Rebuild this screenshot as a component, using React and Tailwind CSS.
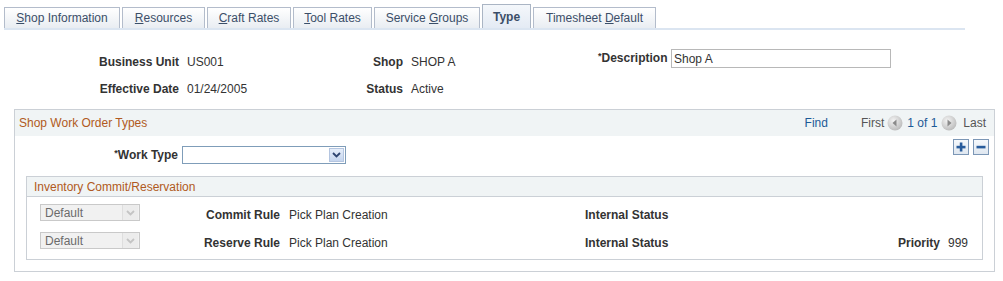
import React from "react";

const tabs = [
  { pre: "", u: "S", post: "hop Information", w: 116 },
  { pre: "", u: "R", post: "esources", w: 83 },
  { pre: "", u: "C", post: "raft Rates", w: 84 },
  { pre: "", u: "T", post: "ool Rates", w: 79 },
  { pre: "Service ", u: "G", post: "roups", w: 106 },
  { pre: "Type", u: "", post: "", w: 49, active: true },
  { pre: "Timesheet ", u: "D", post: "efault", w: 123 },
];

function Tab({ t }) {
  if (t.active) {
    return (
      <div
        style={{ width: t.w }}
        className="h-[24px] mr-[2px] border border-b-0 border-[#aab5c4] bg-gradient-to-b from-[#f4f7fb] to-[#e4ebf4] flex items-center justify-center font-bold text-[#3b4e68]"
      >
        {t.pre}
      </div>
    );
  }
  return (
    <div
      style={{ width: t.w }}
      className="h-[21px] mr-[2px] border border-b-0 border-[#b3bccb] bg-gradient-to-b from-[#ffffff] to-[#e9edf2] flex items-center justify-center text-[#3b4e68]"
    >
      <span>
        {t.pre}
        <span className="underline">{t.u}</span>
        {t.post}
      </span>
    </div>
  );
}

function RoundArrow({ dir }) {
  return (
    <svg width="16" height="16" viewBox="0 0 16 16" className="inline-block">
      <defs>
        <radialGradient id={"g" + dir} cx="40%" cy="35%" r="70%">
          <stop offset="0%" stopColor="#f4f4f4" />
          <stop offset="100%" stopColor="#b9b9b9" />
        </radialGradient>
      </defs>
      <circle cx="8" cy="8" r="7.5" fill={"url(#g" + dir + ")"} />
      {dir === "l" ? (
        <polygon points="9.5,4.5 9.5,11.5 5.5,8" fill="#8a8a8a" />
      ) : (
        <polygon points="6.5,4.5 6.5,11.5 10.5,8" fill="#8a8a8a" />
      )}
    </svg>
  );
}

function Chevron({ color }) {
  return (
    <svg width="9" height="6" viewBox="0 0 9 6">
      <polyline points="1,1 4.5,4.5 8,1" fill="none" stroke={color} strokeWidth="1.8" />
    </svg>
  );
}

function Req() {
  return <span className="text-[9px] leading-[9px] align-top relative top-[1px]">*</span>;
}

function DisabledSelect() {
  return (
    <div className="w-[100px] h-[17px] border border-[#c9c9c9] bg-[#f1f1f1] flex items-center">
      <span className="flex-1 pl-[4px] text-[#6b6b6b]">Default</span>
      <div className="w-[16px] h-[15px] mr-[1px] bg-[#ececec] border-l border-[#dedede] flex items-center justify-center">
        <Chevron color="#c4c4c4" />
      </div>
    </div>
  );
}

export default function App() {
  return (
    <div
      className="w-[1003px] h-[281px] bg-white text-[12px] leading-[14px] text-[#333]"
      style={{ fontFamily: '"Liberation Sans", Arial, sans-serif' }}
    >
      {/* Tabs */}
      <div className="pl-[4px] pt-[4px]">
        <div className="flex items-end">
          {tabs.map((t, i) => (
            <Tab key={i} t={t} />
          ))}
        </div>
        <div className="w-[961px] h-[2px] bg-[#dbe5f1]" />
      </div>

      {/* Header fields */}
      <div className="flex items-start mt-[19px]">
        <div className="w-[179px] text-right font-bold pt-[6px]">Business Unit</div>
        <div className="w-[158px] pl-[8px] pt-[6px]">US001</div>
        <div className="w-[66px] text-right font-bold pt-[6px]">Shop</div>
        <div className="w-[195px] pl-[8px] pt-[6px]">SHOP A</div>
        <div className="w-[69px] text-right font-bold pt-[2px] whitespace-nowrap">
          <Req />Description
        </div>
        <div className="ml-[4px] w-[220px] h-[19px] border border-[#b8b8b8] flex items-center pl-[2px]">
          Shop A
        </div>
      </div>
      <div className="flex items-start mt-[13px]">
        <div className="w-[179px] text-right font-bold">Effective Date</div>
        <div className="w-[158px] pl-[8px]">01/24/2005</div>
        <div className="w-[66px] text-right font-bold">Status</div>
        <div className="pl-[8px]">Active</div>
      </div>

      {/* Shop Work Order Types */}
      <div className="ml-[14px] mt-[13px] w-[981px] border border-[#cbd0d6]">
        <div className="h-[26px] bg-[#f0f4f5] flex items-center">
          <div className="pl-[4px] text-[#b05a22] flex-1">Shop Work Order Types</div>
          <div className="text-[#1d5a97] mr-[33px]">Find</div>
          <div className="text-[#555] mr-[3px]">First</div>
          <RoundArrow dir="l" />
          <div className="text-[#1d5a97] mx-[4px]">1 of 1</div>
          <RoundArrow dir="r" />
          <div className="text-[#555] ml-[6px] mr-[8px]">Last</div>
        </div>

        <div className="flex items-start justify-between">
          <div className="flex items-center mt-[10px]">
            <div className="w-[163px] text-right font-bold whitespace-nowrap">
              <Req />Work Type
            </div>
            <div className="ml-[4px] w-[164px] h-[18px] border border-[#7f9db9] flex items-center justify-end">
              <div className="w-[15px] h-[14px] mr-[1px] bg-gradient-to-b from-[#e6eefa] to-[#c5d5ee] border border-[#b4c5e0] flex items-center justify-center">
                <Chevron color="#2e4470" />
              </div>
            </div>
          </div>
          <div className="flex mt-[3px] mr-[5px] gap-[4px]">
            <div className="w-[16px] h-[16px] border border-[#7c97b6] bg-gradient-to-b from-[#f6f9fc] to-[#dfe7f0] flex items-center justify-center">
              <svg width="10" height="10" viewBox="0 0 10 10">
                <rect x="3.8" y="0.5" width="2.6" height="9" fill="#285c9c" />
                <rect x="0.5" y="3.8" width="9" height="2.6" fill="#285c9c" />
              </svg>
            </div>
            <div className="w-[16px] h-[16px] border border-[#7c97b6] bg-gradient-to-b from-[#f6f9fc] to-[#dfe7f0] flex items-center justify-center">
              <svg width="10" height="10" viewBox="0 0 10 10">
                <rect x="0.5" y="3.8" width="9" height="2.6" fill="#285c9c" />
              </svg>
            </div>
          </div>
        </div>

        {/* Inventory Commit/Reservation */}
        <div className="mx-[11px] mt-[12px] mb-[11px] border border-[#cbd0d6]">
          <div className="h-[20px] bg-[#f0f4f5] border-b border-[#cbd0d6] flex items-center pl-[7px] text-[#b05a22]">
            Inventory Commit/Reservation
          </div>
          <div className="pt-[7px] pb-[9px] flex flex-col gap-[10px]">
            <div className="flex items-start">
              <div className="ml-[13px]">
                <DisabledSelect />
              </div>
              <div className="w-[140px] text-right font-bold pt-[4px]">Commit Rule</div>
              <div className="w-[305px] pl-[9px] pt-[4px]">Pick Plan Creation</div>
              <div className="font-bold pt-[4px]">Internal Status</div>
            </div>
            <div className="flex items-start">
              <div className="ml-[13px]">
                <DisabledSelect />
              </div>
              <div className="w-[140px] text-right font-bold pt-[4px]">Reserve Rule</div>
              <div className="w-[305px] pl-[9px] pt-[4px]">Pick Plan Creation</div>
              <div className="w-[200px] font-bold pt-[4px]">Internal Status</div>
              <div className="w-[155px] text-right font-bold pt-[4px]">Priority</div>
              <div className="pl-[8px] pt-[4px]">999</div>
            </div>
          </div>
        </div>
      </div>
    </div>
  );
}
